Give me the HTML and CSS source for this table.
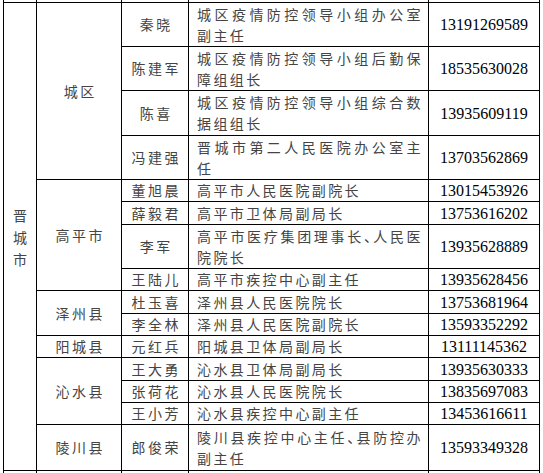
FILE: index.html
```html
<!DOCTYPE html>
<html lang="zh-CN">
<head>
<meta charset="utf-8">
<title>晋城市</title>
<link rel="stylesheet" href="styles.css">
</head>
<body>
<div class="wrap">
<table class="tbl">
<colgroup>
<col class="w1"><col class="w2"><col class="w3"><col class="w4"><col class="w5">
</colgroup>
<tbody>
<tr class="r20"><td></td><td></td><td></td><td></td><td></td></tr>
<tr class="r44">
  <td class="c v" rowspan="15">晋<br>城<br>市</td>
  <td class="c" rowspan="4">城区</td>
  <td class="c">秦晓</td>
  <td class="d"><span class="j">城区疫情防控领导小组办公室</span><span class="l">副主任</span></td>
  <td class="p">13191269589</td>
</tr>
<tr class="r44">
  <td class="c">陈建军</td>
  <td class="d"><span class="j">城区疫情防控领导小组后勤保</span><span class="l">障组组长</span></td>
  <td class="p">18535630028</td>
</tr>
<tr class="r45">
  <td class="c">陈喜</td>
  <td class="d"><span class="j">城区疫情防控领导小组综合数</span><span class="l">据组组长</span></td>
  <td class="p">13935609119</td>
</tr>
<tr class="r44">
  <td class="c">冯建强</td>
  <td class="d"><span class="j">晋城市第二人民医院办公室主</span><span class="l">任</span></td>
  <td class="p">13703562869</td>
</tr>
<tr class="r22">
  <td class="c" rowspan="4">高平市</td>
  <td class="c">董旭晨</td>
  <td class="d"><span class="l">高平市人民医院副院长</span></td>
  <td class="p">13015453926</td>
</tr>
<tr class="r23">
  <td class="c">薛毅君</td>
  <td class="d"><span class="l">高平市卫体局副局长</span></td>
  <td class="p">13753616202</td>
</tr>
<tr class="r44">
  <td class="c">李军</td>
  <td class="d"><span class="j">高平市医疗集团理事长<span class="dun">、</span>人民医</span><span class="l">院院长</span></td>
  <td class="p">13935628889</td>
</tr>
<tr class="r22">
  <td class="c">王陆儿</td>
  <td class="d"><span class="l">高平市疾控中心副主任</span></td>
  <td class="p">13935628456</td>
</tr>
<tr class="r23">
  <td class="c" rowspan="2">泽州县</td>
  <td class="c">杜玉喜</td>
  <td class="d"><span class="l">泽州县人民医院院长</span></td>
  <td class="p">13753681964</td>
</tr>
<tr class="r22">
  <td class="c">李全林</td>
  <td class="d"><span class="l">泽州县人民医院副院长</span></td>
  <td class="p">13593352292</td>
</tr>
<tr class="r22">
  <td class="c">阳城县</td>
  <td class="c">元红兵</td>
  <td class="d"><span class="l">阳城县卫体局副局长</span></td>
  <td class="p">13111145362</td>
</tr>
<tr class="r23">
  <td class="c" rowspan="3">沁水县</td>
  <td class="c">王大勇</td>
  <td class="d"><span class="l">沁水县卫体局副局长</span></td>
  <td class="p">13935630333</td>
</tr>
<tr class="r22">
  <td class="c">张荷花</td>
  <td class="d"><span class="l">沁水县人民医院院长</span></td>
  <td class="p">13835697083</td>
</tr>
<tr class="r22">
  <td class="c">王小芳</td>
  <td class="d"><span class="l">沁水县疾控中心副主任</span></td>
  <td class="p">13453616611</td>
</tr>
<tr class="r46">
  <td class="c">陵川县</td>
  <td class="c">郎俊荣</td>
  <td class="d"><span class="j">陵川县疾控中心主任<span class="dun">、</span>县防控办</span><span class="l">副主任</span></td>
  <td class="p">13593349328</td>
</tr>
<tr class="r22"><td></td><td></td><td></td><td></td><td></td></tr>
</tbody>
</table>
</div>
</body>
</html>
```
FILE: styles.css
```css
html, body {
  margin: 0;
  padding: 0;
  background: #ffffff;
}
.wrap {
  padding-left: 3px;
  height: 473px;
  overflow: hidden;
}
.tbl {
  border-collapse: collapse;
  table-layout: fixed;
  width: 537px;
  margin-top: -18px;
  font-family: "Noto Sans CJK SC", sans-serif;
  font-size: 14px;
  color: #444444;
}
.w1 { width: 33px; }
.w2 { width: 85px; }
.w3 { width: 67px; }
.w4 { width: 240px; }
.w5 { width: 111px; }
.tbl td {
  border: 1px solid #000000;
  padding: 0;
  line-height: 21px;
  vertical-align: middle;
}
.r20 { height: 20px; }
.r22 { height: 22px; }
.r23 { height: 23px; }
.r44 { height: 44px; }
.r45 { height: 45px; }
.r46 { height: 46px; }
.tbl td.c {
  text-align: center;
  letter-spacing: 2.4px;
  padding-left: 2.4px;
}
.tbl td.v {
  line-height: 22px;
}
.tbl td.d {
  padding: 0 5px 0 8px;
  letter-spacing: 2.4px;
}
.d .j {
  display: block;
  text-align: justify;
  text-align-last: justify;
}
.d .l {
  display: block;
}
.dun {
  letter-spacing: -5px;
}
.tbl td.p {
  font-family: "Liberation Serif", serif;
  font-size: 16px;
  color: #000000;
  text-align: center;
}
```
